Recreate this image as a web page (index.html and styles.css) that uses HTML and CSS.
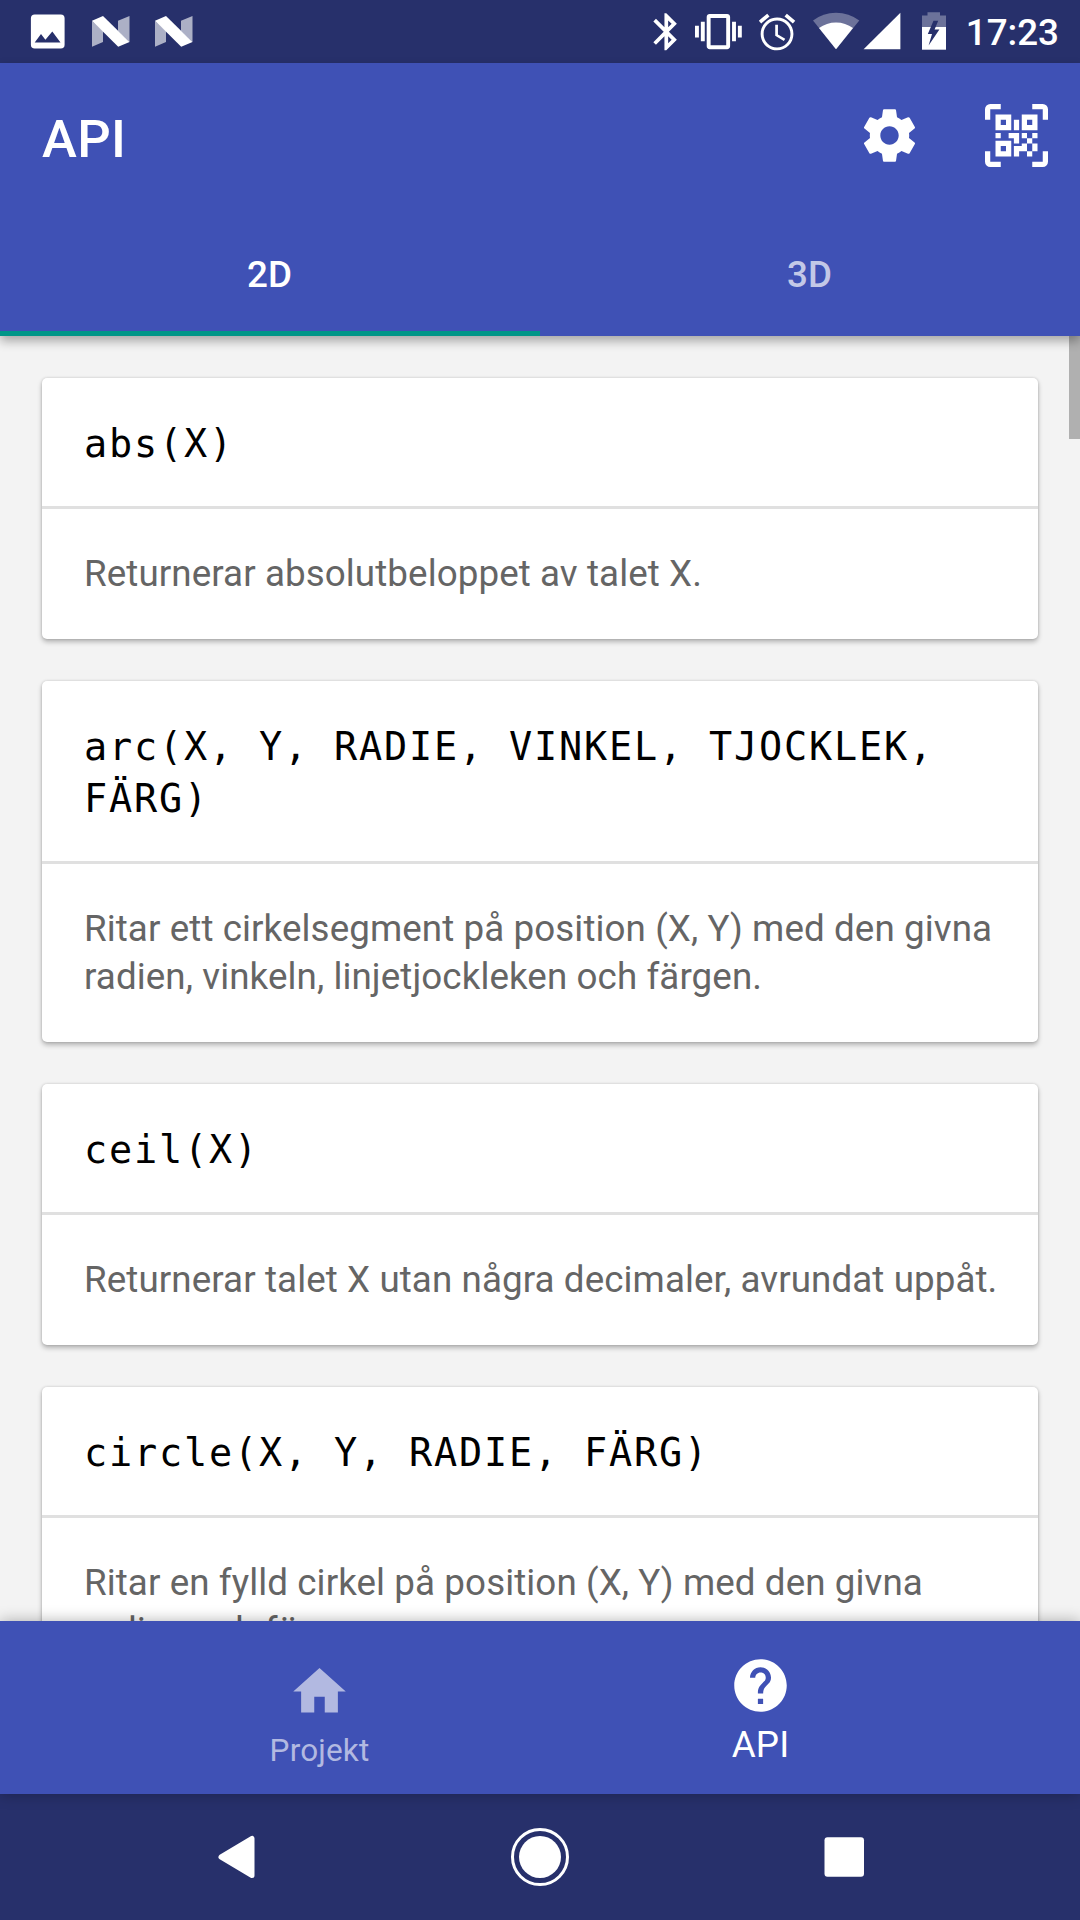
FILE: index.html
```html
<!DOCTYPE html>
<html lang="sv">
<head>
<meta charset="utf-8">
<title>API</title>
<link rel="stylesheet" href="styles.css">
</head>
<body>
<div class="screen">
  <div class="status-bar">
    <div class="status-group">
      <svg width="50" height="63" viewBox="23 0 50 63"><path fill="#fff" fill-rule="evenodd" d="M34.7 14.4H60.8a3.8 3.8 0 0 1 3.8 3.8V44.7a3.8 3.8 0 0 1-3.8 3.8H34.7a3.8 3.8 0 0 1-3.8-3.8V18.2a3.8 3.8 0 0 1 3.8-3.8zM34.7 42.6H60.5L52.3 31.6 45.4 39.8 41 34z"/></svg>
      <svg width="63" height="63" viewBox="79 0 63 63"><path fill="#fff" fill-opacity=".62" d="M92 20.7V46.8L103 42V31zM118 20.7L129.5 16V42L118 31z"/><path fill="#fff" d="M92 20.7L103 16 129.5 42 118.2 46.8z"/></svg>
      <svg width="63" height="63" viewBox="79 0 63 63"><path fill="#fff" fill-opacity=".62" d="M92 20.7V46.8L103 42V31zM118 20.7L129.5 16V42L118 31z"/><path fill="#fff" d="M92 20.7L103 16 129.5 42 118.2 46.8z"/></svg>
    </div>
    <div class="status-group">
      <svg width="45" height="63" viewBox="644 0 45 63"><path fill="#fff" transform="translate(644.1 9.6) scale(1.85)" d="M17.71 7.71L12 2h-1v7.59L6.41 5 5 6.41 10.59 12 5 17.59 6.41 19 11 14.41V22h1l5.71-5.71-4.3-4.29 4.3-4.29zM13 5.83l1.88 1.88L13 9.59V5.83zm1.88 10.46L13 18.17v-3.76l1.88 1.88z"/></svg>
      <svg width="61" height="63" viewBox="689 0 61 63"><path fill="#fff" transform="translate(695 8.2) scale(1.95)" d="M0 15h2V9H0v6zm3 2h2V7H3v10zm19-8v6h2V9h-2zm-3 8h2V7h-2v10zM16.5 3h-9C6.67 3 6 3.67 6 4.5v15c0 .83.67 1.5 1.5 1.5h9c.83 0 1.5-.67 1.5-1.5v-15c0-.83-.67-1.5-1.5-1.5zM16 19H8V5h8v14z"/></svg>
      <svg width="56" height="63" viewBox="750 0 56 63"><path fill="#fff" transform="translate(755.2 10.3) scale(1.82)" d="M22 5.72l-4.6-3.86-1.29 1.53 4.6 3.86L22 5.72zM7.88 3.39L6.6 1.86 2 5.71l1.29 1.53 4.59-3.85zM12.5 8H11v6l4.75 2.85.75-1.23-4-2.37V8zM12 4c-4.97 0-9 4.03-9 9s4.02 9 9 9c4.97 0 9-4.03 9-9s-4.03-9-9-9zm0 16.4c-4.1 0-7.4-3.3-7.4-7.4s3.3-7.4 7.4-7.4 7.4 3.3 7.4 7.4-3.3 7.4-7.4 7.4z"/></svg>
      <svg width="56" height="63" viewBox="806 0 56 63"><path fill="#fff" fill-opacity=".32" d="M836 49.3L813 20.6Q823 12.8 836 12.8T859.3 20.6z"/><path fill="#fff" d="M836 49.3L819 28Q826.5 22.4 836 22.4T853 28z"/></svg>
      <svg width="48" height="63" viewBox="862 0 48 63"><path fill="#fff" d="M863.6 49.3L900.4 12.7V49.3z"/></svg>
      <svg width="50" height="63" viewBox="910 0 50 63"><path fill="#fff" fill-opacity=".32" d="M922 15.5H927.5V12.3H940V15.5H946V27H922z"/><path fill="#fff" d="M922 27H946V49.7H922z"/><path fill="#27306b" d="M933.5 20.8L927.8 33.9H932L928.6 45.5 939.4 29.4H934.6L938.2 20.8z"/></svg>
      <span class="clock">17:23</span>
    </div>
  </div>

  <header class="app-bar">
    <div class="toolbar">
      <h1 class="title">API</h1>
      <div class="actions">
        <svg width="63" height="63" viewBox="0 0 24 24"><path fill="#fff" d="M19.43 12.98c.04-.32.07-.64.07-.98s-.03-.66-.07-.98l2.11-1.65c.19-.15.24-.42.12-.64l-2-3.46c-.12-.22-.39-.3-.61-.22l-2.49 1c-.52-.4-1.08-.73-1.69-.98l-.38-2.65C14.46 2.18 14.25 2 14 2h-4c-.25 0-.46.18-.49.42l-.38 2.65c-.61.25-1.17.59-1.69.98l-2.49-1c-.23-.09-.49 0-.61.22l-2 3.46c-.13.22-.07.49.12.64l2.11 1.65c-.04.32-.07.65-.07.98s.03.66.07.98l-2.11 1.65c-.19.15-.24.42-.12.64l2 3.46c.12.22.39.3.61.22l2.49-1c.52.4 1.08.73 1.69.98l.38 2.65c.03.24.24.42.49.42h4c.25 0 .46-.18.49-.42l.38-2.65c.61-.25 1.17-.59 1.69-.98l2.49 1c.23.09.49 0 .61-.22l2-3.46c.12-.22.07-.49-.12-.64l-2.11-1.65zM12 15.5c-1.93 0-3.5-1.57-3.5-3.5s1.57-3.5 3.5-3.5 3.5 1.57 3.5 3.5-1.57 3.5-3.5 3.5z"/></svg>
        <svg width="63" height="63" viewBox="0 0 12 12"><path fill="#fff" fill-rule="evenodd" d="M3 0H1A1 1 0 0 0 0 1V3H1V1H3zM9 0H11A1 1 0 0 1 12 1V3H11V1H9zM3 12H1A1 1 0 0 1 0 11V9H1V11H3zM9 12H11A1 1 0 0 0 12 11V9H11V11H9zM2 2H5V5H2zM3 3V4H4V3zM7 2H10V5H7zM8 3V4H9V3zM2 7H5V10H2zM3 8V9H4V8zM5.5 3H6.5V5H5.5zM2 5.5H3V6.5H2zM4.5 5.5H6.5V7.5H5.5V6.5H4.5zM7 5.5H8V6.5H7zM9 5.5H10V6.5H9zM8 6.5H9V7.5H8zM7 7.5H8V9H6.5V10H5.5V8H7zM9 7.5H10V9H9zM8 9H9V10H8z"/></svg>
      </div>
    </div>
    <nav class="tabs">
      <div class="tab tab-active">2D</div>
      <div class="tab">3D</div>
    </nav>
  </header>

  <main class="content">
    <article class="card">
      <h2 class="signature">abs(X)</h2>
      <p class="description">Returnerar absolutbeloppet av talet X.</p>
    </article>
    <article class="card">
      <h2 class="signature">arc(X, Y, RADIE, VINKEL, TJOCKLEK, FÄRG)</h2>
      <p class="description">Ritar ett cirkelsegment på position (X, Y) med den givna radien, vinkeln, linjetjockleken och färgen.</p>
    </article>
    <article class="card">
      <h2 class="signature">ceil(X)</h2>
      <p class="description">Returnerar talet X utan några decimaler, avrundat uppåt.</p>
    </article>
    <article class="card">
      <h2 class="signature">circle(X, Y, RADIE, FÄRG)</h2>
      <p class="description">Ritar en fylld cirkel på position (X, Y) med den givna radien och färgen.</p>
    </article>
    <div class="scrollbar"></div>
  </main>

  <nav class="bottom-nav">
    <div class="nav-item">
      <svg width="63" height="63" viewBox="0 0 24 24"><path fill="currentColor" d="M10 20v-6h4v6h5v-8h3L12 3 2 12h3v8z"/></svg>
      <span class="nav-label">Projekt</span>
    </div>
    <div class="nav-item nav-item-active">
      <svg width="63" height="63" viewBox="0 0 24 24"><path fill="currentColor" d="M12 2C6.48 2 2 6.48 2 12s4.48 10 10 10 10-4.48 10-10S17.52 2 12 2zm1 17h-2v-2h2v2zm2.07-7.75l-.9.92C13.45 12.9 13 13.5 13 15h-2v-.5c0-1.1.45-2.1 1.17-2.83l1.24-1.26c.37-.36.59-.86.59-1.41 0-1.1-.9-2-2-2s-2 .9-2 2H8c0-2.21 1.79-4 4-4s4 1.79 4 4c0 .88-.36 1.68-.93 2.25z"/></svg>
      <span class="nav-label">API</span>
    </div>
  </nav>

  <div class="system-nav">
    <svg width="60" height="60" viewBox="0 0 60 60"><path fill="#fff" stroke="#fff" stroke-width="5" stroke-linejoin="round" d="M15 30L46 11.5V48.5z"/></svg>
    <svg width="60" height="60" viewBox="0 0 60 60"><circle cx="30" cy="30" r="27.5" fill="none" stroke="#fff" stroke-width="3"/><circle cx="30" cy="30" r="21" fill="#fff"/></svg>
    <svg width="60" height="60" viewBox="0 0 60 60"><rect x="10.5" y="10.2" width="39.5" height="39.5" rx="3" fill="#fff"/></svg>
  </div>
</div>
</body>
</html>
```
FILE: styles.css
```css
* {
  box-sizing: border-box;
}

body {
  margin: 0;
  font-family: Roboto, "Liberation Sans", sans-serif;
}

svg {
  display: block;
  flex: none;
}

.screen {
  display: flex;
  flex-direction: column;
  width: 1080px;
  height: 1920px;
  overflow: hidden;
  background: #f3f3f3;
}

.status-bar {
  display: flex;
  justify-content: space-between;
  flex: none;
  height: 63px;
  padding: 0 21px 0 23px;
  background: #27306b;
}

.status-group {
  display: flex;
  align-items: center;
}

.status-group:first-child svg:first-child {
  margin-right: 6px;
}

.clock {
  width: 99px;
  padding-top: 2px;
  color: #fff;
  font-size: 36.75px;
  font-weight: 500;
  text-align: right;
}

.app-bar {
  position: relative;
  z-index: 1;
  flex: none;
  height: 273px;
  background: #3f51b5;
  box-shadow: 0 5px 10px rgba(0, 0, 0, 0.32);
}

.toolbar {
  display: flex;
  justify-content: space-between;
  align-items: center;
  height: 147px;
  padding: 0 32px 0 42px;
}

.title {
  margin: 5px 0 0;
  color: #fff;
  font-size: 52.5px;
  font-weight: 500;
  letter-spacing: 0.4px;
  line-height: 62px;
}

.actions {
  display: flex;
  gap: 64px;
  padding-bottom: 2px;
}

.tabs {
  display: flex;
  height: 126px;
}

.tab {
  flex: 1;
  padding: 43px 1px 0 0;
  border-bottom: 5px solid transparent;
  color: rgba(255, 255, 255, 0.7);
  font-size: 36.75px;
  font-weight: 500;
  line-height: 43px;
  text-align: center;
}

.tab-active {
  border-bottom-color: #009688;
  color: #fff;
}

.content {
  position: relative;
  display: flex;
  flex-direction: column;
  gap: 42px;
  flex: 1;
  min-height: 0;
  padding: 42px 42px 0;
  overflow: hidden;
}

.card {
  flex: none;
  border-radius: 5px;
  background: #fff;
  box-shadow: 0 3px 5px rgba(0, 0, 0, 0.26), 0 0 3px rgba(0, 0, 0, 0.16);
}

.signature {
  margin: 0;
  padding: 40px 42px 36px;
  border-bottom: 3px solid #e0e0e0;
  color: #000;
  font-family: "DejaVu Sans Mono", "Liberation Mono", monospace;
  font-size: 38.5px;
  font-weight: 400;
  letter-spacing: 1.82px;
  line-height: 52px;
}

.description {
  margin: 0;
  padding: 41px 36px 41px 42px;
  color: #656565;
  font-size: 36.75px;
  letter-spacing: 0.09px;
  line-height: 48px;
}

.scrollbar {
  position: absolute;
  top: 0;
  right: 0;
  width: 11px;
  height: 103px;
  background: #b0b0b0;
}

.bottom-nav {
  position: relative;
  display: flex;
  justify-content: center;
  flex: none;
  height: 173px;
  background: #3f51b5;
  box-shadow: 0 0 14px rgba(0, 0, 0, 0.3);
}

.nav-item {
  display: flex;
  flex-direction: column;
  align-items: center;
  width: 441px;
  padding-top: 39px;
  color: #b2b9e1;
}

.nav-label {
  margin-top: 9px;
  font-size: 31.5px;
  letter-spacing: 0.15px;
  line-height: 37px;
}

.nav-item-active {
  padding-top: 33px;
  color: #fff;
}

.nav-item-active .nav-label {
  margin-top: 6px;
  font-size: 36.75px;
  line-height: 43px;
}

.system-nav {
  display: flex;
  justify-content: center;
  align-items: center;
  gap: 244px;
  flex: none;
  height: 126px;
  background: #27306b;
}
```
